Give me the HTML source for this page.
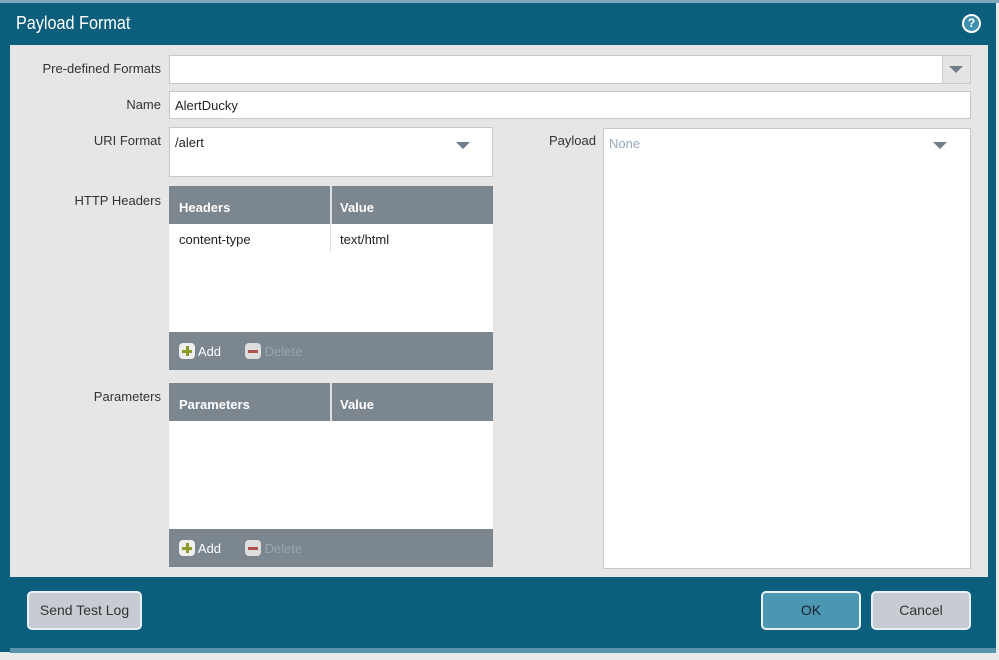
<!DOCTYPE html>
<html><head><style>
*{box-sizing:border-box;margin:0;padding:0}
body{width:999px;height:660px;background:#eaeaea;position:relative;overflow:hidden;font-family:"Liberation Sans",sans-serif;font-size:13px;color:#222}
.a{position:absolute}
.lbl{position:absolute;text-align:right;width:150px;left:11px;color:#333}
.inp{position:absolute;background:#fff;border:1px solid #c8c8c8}
.hdr{position:absolute;background:#7b868e;color:#fff;font-weight:bold;font-size:13px}
.tri{position:absolute;width:0;height:0;border-left:7px solid transparent;border-right:7px solid transparent;border-top:7px solid #6f7e8a}
.btn{position:absolute;border:2px solid #e8f2f6;border-radius:5px;text-align:center;line-height:35px;font-size:14px;color:#333}
.ic{display:inline-block;width:16px;height:16px;border-radius:4px;vertical-align:-3px;position:relative}
</style></head><body>
<div class="a" style="left:0;top:0;width:996px;height:652px;background:#0b5f7c"></div>
<div class="a" style="left:0;top:0;width:999px;height:3px;background:#7fa9ba"></div>
<div class="a" style="left:10px;top:648px;width:986px;height:5px;background:#5a94aa"></div>
<div class="a" style="left:16px;top:13px;color:#fff;font-size:18px;transform:scaleX(.9);transform-origin:left">Payload Format</div>
<div class="a" style="left:962px;top:14px;width:19px;height:19px;border-radius:50%;border:2px solid #fff;background:#3f8fb0;color:#fff;font-weight:bold;font-size:12px;text-align:center;line-height:15px">?</div>
<div class="a" style="left:10px;top:45px;width:978px;height:532px;background:#e6e6e6"></div>

<div class="lbl" style="top:61px">Pre-defined Formats</div>
<div class="inp" style="left:169px;top:55px;width:802px;height:29px"></div>
<div class="a" style="left:942px;top:56px;width:28px;height:27px;background:#e4e4e4;border-left:1px solid #ccc"></div>
<div class="tri" style="left:949px;top:66px"></div>

<div class="lbl" style="top:97px">Name</div>
<div class="inp" style="left:169px;top:91px;width:802px;height:28px;padding:6px 5px">AlertDucky</div>

<div class="lbl" style="top:133px">URI Format</div>
<div class="inp" style="left:169px;top:127px;width:324px;height:50px;padding:7px 5px">/alert</div>
<div class="tri" style="left:456px;top:142px"></div>

<div class="a" style="left:500px;top:133px;width:96px;text-align:right;color:#333">Payload</div>
<div class="inp" style="left:603px;top:128px;width:368px;height:441px;padding:7px 5px;color:#9aa8b4">None</div>
<div class="tri" style="left:933px;top:142px"></div>

<div class="lbl" style="top:193px">HTTP Headers</div>
<div class="inp" style="left:169px;top:186px;width:324px;height:184px;border:none"></div>
<div class="hdr" style="left:169px;top:186px;width:324px;height:38px"><span class="a" style="left:10px;top:14px">Headers</span><div class="a" style="left:161px;top:0;width:2px;height:38px;background:#e0e0e0"></div><span class="a" style="left:171px;top:14px">Value</span></div>
<div class="a" style="left:179px;top:232px">content-type</div>
<div class="a" style="left:330px;top:224px;width:1px;height:28px;background:#ddd"></div>
<div class="a" style="left:340px;top:232px">text/html</div>
<div class="hdr" style="left:169px;top:332px;width:324px;height:38px;font-weight:normal"><span class="a" style="left:10px;top:11px"><span class="ic" style="background:#eee"><span class="a" style="left:3px;top:7px;width:10px;height:3px;background:#8a9a24"></span><span class="a" style="left:6.5px;top:3px;width:3px;height:10px;background:#8a9a24"></span></span> Add</span><span class="a" style="left:76px;top:11px;color:#9aa4ab"><span class="ic" style="background:#ddd"><span class="a" style="left:3px;top:7px;width:10px;height:3px;background:#b05050"></span></span> Delete</span></div>

<div class="lbl" style="top:389px">Parameters</div>
<div class="inp" style="left:169px;top:383px;width:324px;height:184px;border:none"></div>
<div class="hdr" style="left:169px;top:383px;width:324px;height:38px"><span class="a" style="left:10px;top:14px">Parameters</span><div class="a" style="left:161px;top:0;width:2px;height:38px;background:#e0e0e0"></div><span class="a" style="left:171px;top:14px">Value</span></div>
<div class="hdr" style="left:169px;top:529px;width:324px;height:38px;font-weight:normal"><span class="a" style="left:10px;top:11px"><span class="ic" style="background:#eee"><span class="a" style="left:3px;top:7px;width:10px;height:3px;background:#8a9a24"></span><span class="a" style="left:6.5px;top:3px;width:3px;height:10px;background:#8a9a24"></span></span> Add</span><span class="a" style="left:76px;top:11px;color:#9aa4ab"><span class="ic" style="background:#ddd"><span class="a" style="left:3px;top:7px;width:10px;height:3px;background:#b05050"></span></span> Delete</span></div>

<div class="btn" style="left:27px;top:591px;width:115px;height:39px;background:#c6ccd1">Send Test Log</div>
<div class="btn" style="left:761px;top:591px;width:100px;height:39px;background:#4b96b0;color:#123">OK</div>
<div class="btn" style="left:871px;top:591px;width:100px;height:39px;background:#c6ccd1">Cancel</div>
</body></html>
